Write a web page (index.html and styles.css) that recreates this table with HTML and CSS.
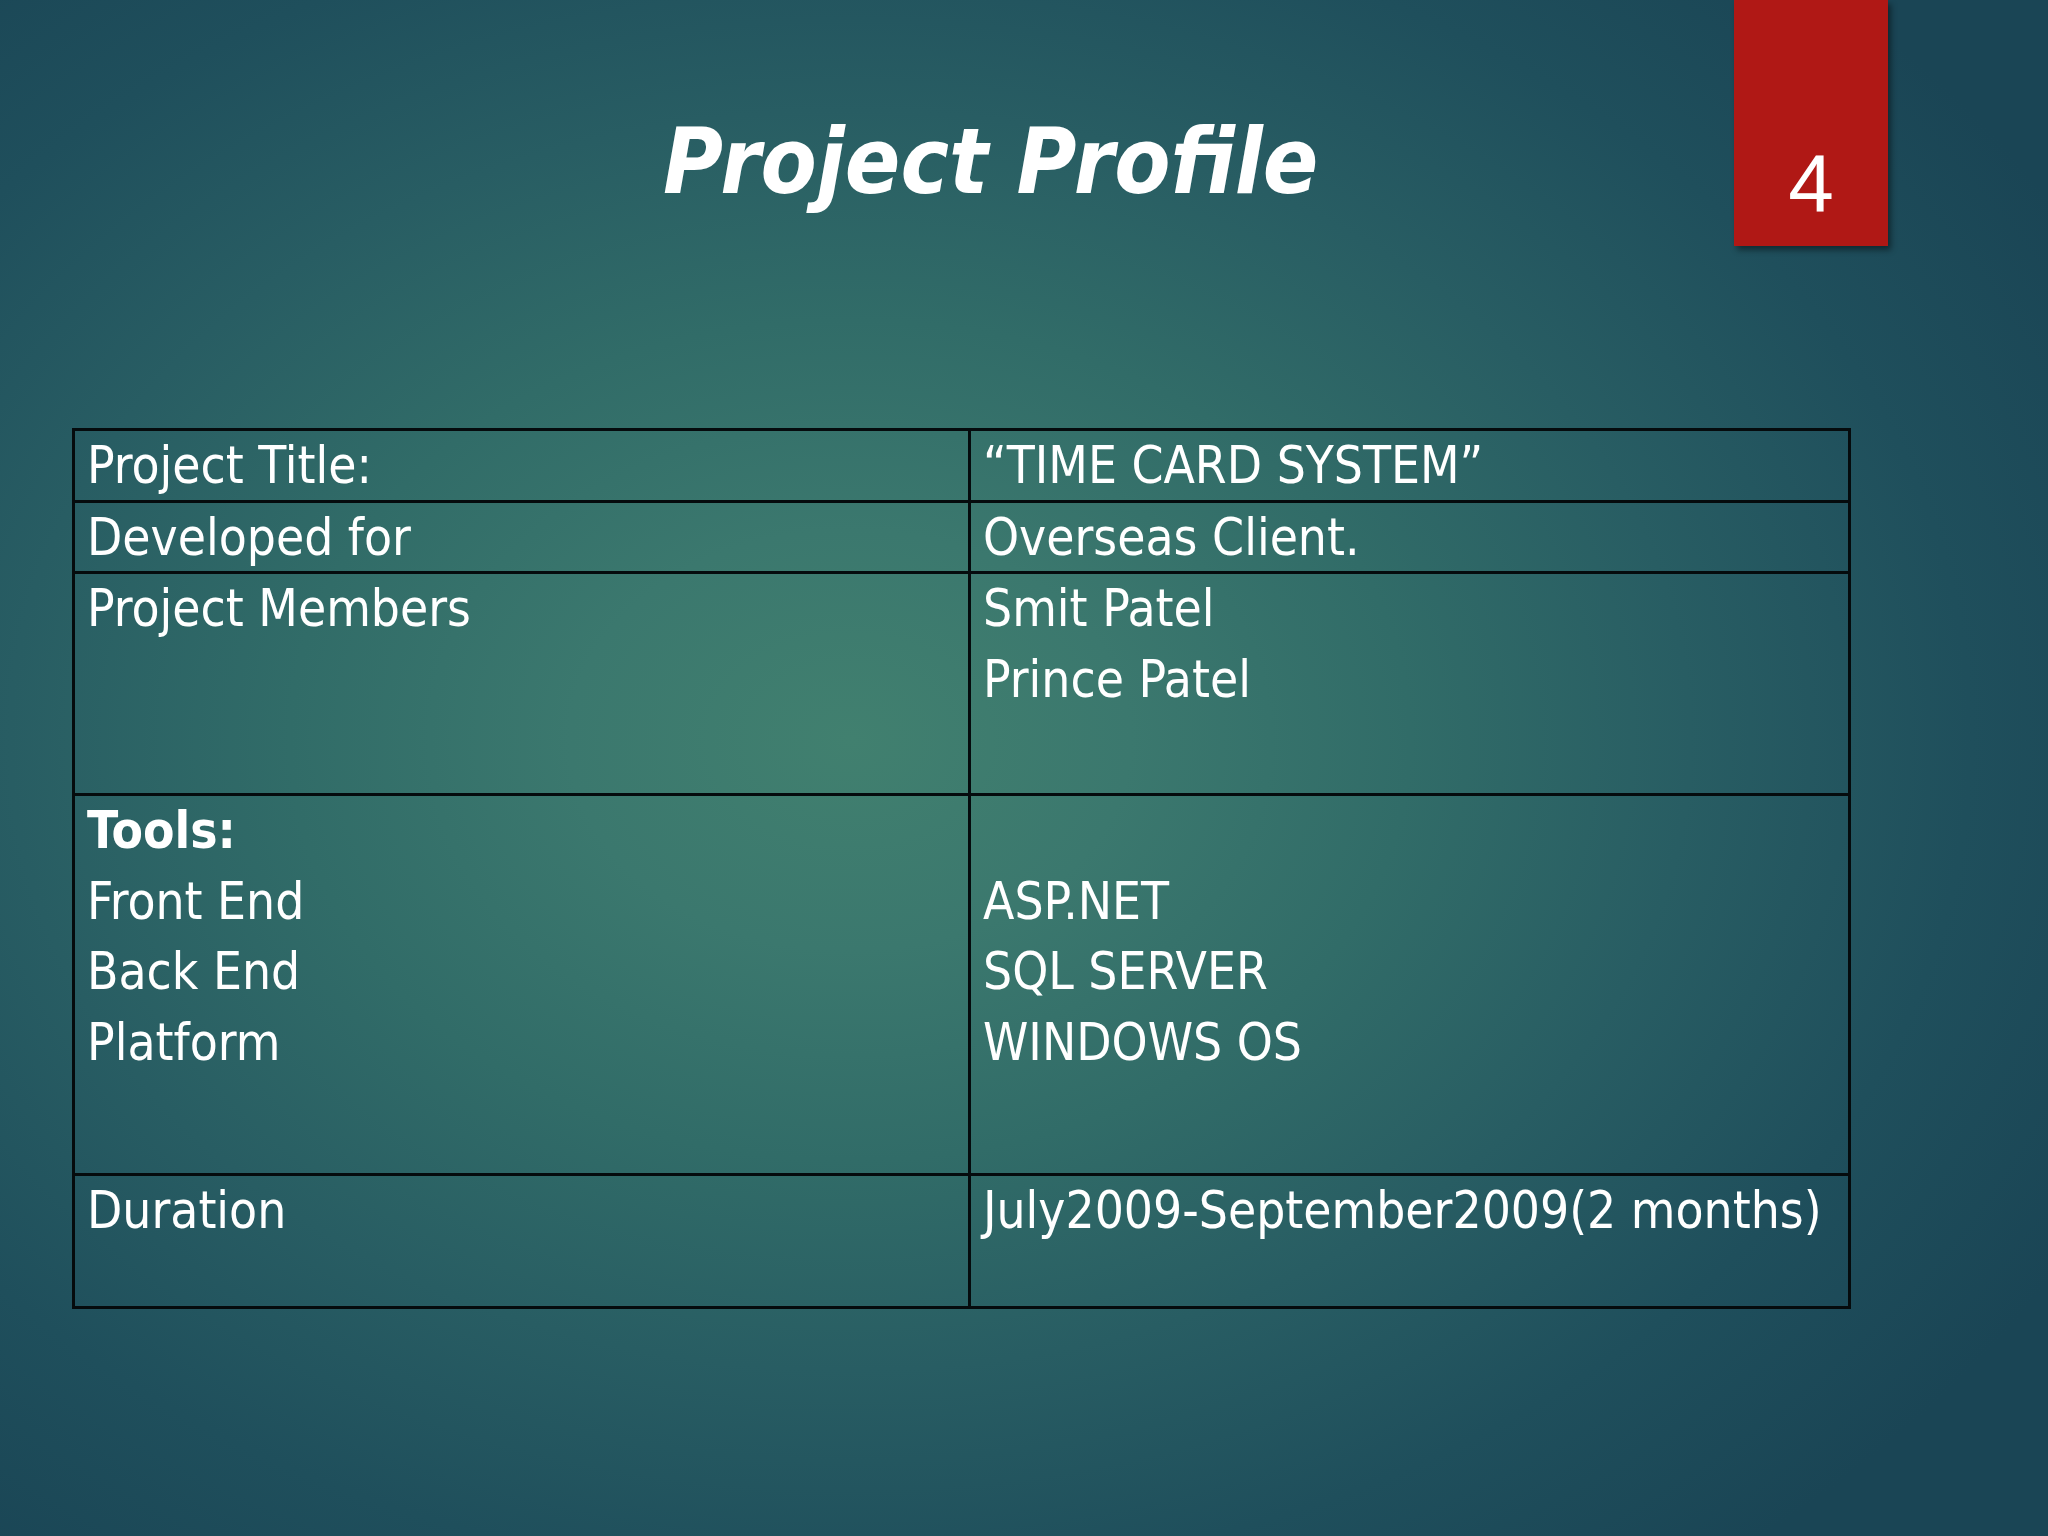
FILE: index.html
```html
<!DOCTYPE html>
<html lang="en">
<head>
<meta charset="utf-8">
<title>Project Profile</title>
<link rel="stylesheet" href="styles.css">
</head>
<body>
<div class="slide">
  <header class="header">
    <h1 class="title">Project Profile</h1>
  </header>
  <div class="badge"><span class="badge-num">4</span></div>
  <table class="profile">
    <colgroup>
      <col class="col1">
      <col class="col2">
    </colgroup>
    <tr class="r1">
      <td><div class="ln one">Project Title:</div></td>
      <td><div class="ln one">“TIME CARD SYSTEM”</div></td>
    </tr>
    <tr class="r2">
      <td><div class="ln one">Developed for</div></td>
      <td><div class="ln one">Overseas Client.</div></td>
    </tr>
    <tr class="r3">
      <td><div class="ln">Project Members</div></td>
      <td><div class="ln">Smit Patel</div><div class="ln">Prince Patel</div></td>
    </tr>
    <tr class="r4">
      <td><div class="ln bold">Tools:</div><div class="ln">Front End</div><div class="ln">Back End</div><div class="ln">Platform</div></td>
      <td><div class="ln">&nbsp;</div><div class="ln">ASP.NET</div><div class="ln">SQL SERVER</div><div class="ln">WINDOWS OS</div></td>
    </tr>
    <tr class="r5">
      <td><div class="ln">Duration</div></td>
      <td><div class="ln">July2009-September2009(2 months)</div></td>
    </tr>
  </table>
</div>
</body>
</html>
```

FILE: styles.css
```css
html, body {
  margin: 0;
  padding: 0;
}
body {
  width: 2048px;
  height: 1536px;
  overflow: hidden;
  font-family: "DejaVu Sans Condensed", "DejaVu Sans", sans-serif;
  font-stretch: semi-condensed;
}
.slide {
  position: relative;
  width: 2048px;
  height: 1536px;
  background:
    radial-gradient(ellipse 1400px 1050px at 850px 740px, #41806f 0%, #3b786e 20%, #316c68 40%, #285d63 60%, #1f4f5c 80%, #1a4555 100%);
  display: flex;
  flex-direction: column;
}
.header {
  padding-top: 116px;
  padding-left: 663px;
  height: 91px;
}
.title {
  margin: 0;
  font-size: 91px;
  line-height: 91px;
  font-weight: bold;
  font-style: italic;
  color: #ffffff;
  white-space: nowrap;
}
.badge {
  position: absolute;
  left: 1734px;
  top: 0;
  width: 154px;
  height: 246px;
  background: #b01815;
  box-shadow: 3px 4px 6px rgba(0, 0, 0, 0.45);
  display: flex;
  align-items: flex-end;
  justify-content: center;
  box-sizing: border-box;
  padding-bottom: 21px;
}
.badge-num {
  font-family: "Liberation Sans", Arial, sans-serif;
  font-stretch: normal;
  font-size: 82px;
  line-height: 82px;
  color: #ffffff;
}
.profile {
  margin-top: 221px;
  margin-left: 72px;
  width: 1776px;
  border-collapse: collapse;
  table-layout: fixed;
  color: #ffffff;
  font-size: 51px;
  line-height: 70.7px;
}
.col1 {
  width: 896px;
}
.col2 {
  width: 880px;
}
.profile td {
  border: 3px solid #050b0d;
  padding: 0 12px;
  vertical-align: top;
  white-space: nowrap;
  overflow: hidden;
}
.r1 { height: 72px; }
.r2 { height: 71px; }
.r3 { height: 222px; }
.r4 { height: 380px; }
.r5 { height: 133px; }
.ln {
  height: 70.7px;
}
.one {
  margin-bottom: -6px;
}
.bold {
  font-weight: bold;
}
```
